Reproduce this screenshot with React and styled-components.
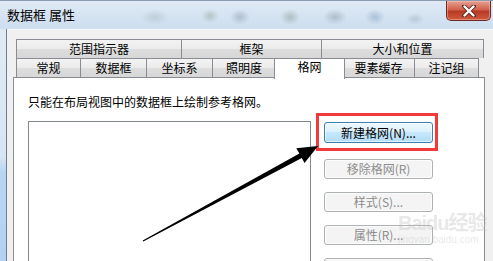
import React from 'react';
import styled, { createGlobalStyle } from 'styled-components';

const GlobalStyle = createGlobalStyle`
  html, body {
    margin: 0;
    padding: 0;
    overflow: hidden;
    background: #ffffff;
  }
`;

const FONT = `"Noto Sans CJK SC", "Liberation Sans", sans-serif`;

const Window = styled.div`
  position: relative;
  width: 493px;
  height: 261px;
  display: flex;
  flex-direction: column;
  overflow: hidden;
  font-family: ${FONT};
  font-size: 12px;
  color: #000;
  background: #c9dcef;
`;

const TitleBar = styled.div`
  height: 28px;
  flex-shrink: 0;
  display: flex;
  align-items: flex-start;
  justify-content: space-between;
  border-top: 1px solid #8a9bb0;
  background:
    radial-gradient(ellipse 9px 7px at 210px 15px, rgba(120, 140, 120, 0.35), transparent),
    radial-gradient(ellipse 10px 8px at 240px 16px, rgba(110, 120, 140, 0.35), transparent),
    radial-gradient(ellipse 10px 8px at 290px 16px, rgba(90, 110, 90, 0.3), transparent),
    radial-gradient(ellipse 12px 8px at 335px 16px, rgba(110, 120, 130, 0.35), transparent),
    radial-gradient(ellipse 10px 8px at 375px 16px, rgba(90, 130, 170, 0.35), transparent),
    radial-gradient(ellipse 9px 6px at 415px 18px, rgba(130, 140, 150, 0.3), transparent),
    radial-gradient(ellipse 14px 8px at 155px 16px, rgba(130, 140, 150, 0.25), transparent),
    linear-gradient(#dfe9f4, #cddef0);
`;

const Title = styled.span`
  margin: 6px 0 0 7px;
  font-size: 13px;
  line-height: 16px;
  white-space: pre;
`;

const CloseButton = styled.div`
  width: 43px;
  height: 19px;
  margin-right: 2px;
  display: flex;
  align-items: center;
  justify-content: center;
  border: 1px solid #6b2b22;
  border-top: none;
  border-radius: 0 0 5px 5px;
  background: linear-gradient(#e6a294 0%, #d2604c 45%, #b73a26 55%, #d05a3c 100%);
  box-shadow: inset 0 0 0 1px rgba(255, 200, 190, 0.45);
`;

const Body = styled.div`
  flex: 1;
  display: flex;
  min-height: 0;
`;

const FrameEdge = styled.div`
  width: 6px;
  flex-shrink: 0;
  border-right: 1px solid #6e7e90;
  background: linear-gradient(#dfeaf5 0%, #d7e6f4 55%, #b7d4f2 62%, #b3d2f3 100%);
`;

const Client = styled.div`
  flex: 1;
  display: flex;
  flex-direction: column;
  padding: 9px 0 0 6px;
  background: #f0f0f0;
  border-top: 1px solid #f7f9fb;
`;

const TabStrip = styled.div`
  display: flex;
  flex-direction: column;
  margin-left: 3px;
`;

const TabRow = styled.div`
  display: flex;
  height: ${p => p.$height}px;
  align-items: flex-end;
`;

const Tab = styled.div`
  box-sizing: border-box;
  width: ${p => p.$width}px;
  height: 100%;
  margin-left: -1px;
  display: flex;
  align-items: center;
  justify-content: center;
  border: 1px solid #898c95;
  border-bottom: none;
  background: linear-gradient(#f3f3f3 0%, #ebebeb 50%, #dddddd 51%, #d7d7d7 100%);
  line-height: 14px;

  &:first-child {
    margin-left: 0;
  }
`;

const ActiveTab = styled(Tab)`
  position: relative;
  z-index: 2;
  height: 21px;
  margin: 0 -2px -2px -2px;
  padding-bottom: 4px;
  background: #ffffff;
`;

const Panel = styled.div`
  flex: 1;
  width: 472px;
  box-sizing: border-box;
  border: 1px solid #898c95;
  border-bottom: none;
  background: #ffffff;
  padding: 16px 0 0 14px;
  display: flex;
  flex-direction: column;
`;

const Hint = styled.div`
  line-height: 16px;
  height: 16px;
`;

const Work = styled.div`
  display: flex;
  gap: 13px;
  margin-top: 11px;
`;

const ListBox = styled.div`
  width: 283px;
  height: 160px;
  box-sizing: border-box;
  border: 1px solid #828790;
  background: #ffffff;
`;

const ButtonColumn = styled.div`
  display: flex;
  flex-direction: column;
  gap: 13px;
  padding-top: 1px;
`;

const Button = styled.div`
  box-sizing: border-box;
  width: 109px;
  height: ${p => (p.$primary ? 21 : 20)}px;
  margin-bottom: ${p => (p.$primary ? 3 : 0)}px;
  display: flex;
  align-items: center;
  justify-content: center;
  border-radius: 3px;
  border: 1px solid ${p => (p.$primary ? '#3c7fb1' : '#adb2b5')};
  color: ${p => (p.$primary ? '#000000' : '#8d8d8d')};
  background: ${p =>
    p.$primary
      ? 'linear-gradient(#eef8fe 0%, #ddf1fc 45%, #c6e8fc 50%, #b2ddf6 100%)'
      : '#f4f4f4'};
  box-shadow: inset 0 0 0 1px ${p => (p.$primary ? 'rgba(255,255,255,0.6)' : '#fcfcfc')};
  line-height: 14px;
`;

const Highlight = styled.div`
  position: absolute;
  left: 316px;
  top: 113px;
  width: 122px;
  height: 38px;
  box-sizing: border-box;
  border: 3px solid #f23a3a;
  pointer-events: none;
`;

const ArrowLayer = styled.svg`
  position: absolute;
  left: 0;
  top: 0;
  pointer-events: none;
`;

const Watermark = styled.div`
  position: absolute;
  left: 398px;
  top: 212px;
  display: flex;
  flex-direction: column;
  white-space: nowrap;
  color: rgba(190, 190, 190, 0.35);
  font-family: "Liberation Sans", ${FONT};
  pointer-events: none;
`;

const MarkTop = styled.span`
  font-size: 20px;
  font-weight: bold;
  line-height: 22px;
  letter-spacing: -1px;
`;

const MarkUrl = styled.span`
  font-size: 10px;
  line-height: 12px;
`;

const rowOne = [
  ['范围指示器', 166],
  ['框架', 141],
  ['大小和位置', 163],
];

const rowTwo = [
  ['常规', 65],
  ['数据框', 67],
  ['坐标系', 67],
  ['照明度', 64],
  ['格网', 71, true],
  ['要素缓存', 73],
  ['注记组', 65],
];

const buttons = ['新建格网(N)...', '移除格网(R)', '样式(S)...', '属性(R)...', ''];

export default function App() {
  return (
    <Window>
      <GlobalStyle />
      <TitleBar>
        <Title>{'数据框 属性'}</Title>
        <CloseButton>
          <svg width="14" height="12" viewBox="0 0 14 12">
            <path
              d="M2 1 L12 11 M12 1 L2 11"
              stroke="#5a2a22"
              strokeWidth="4"
              strokeLinecap="round"
              fill="none"
            />
            <path
              d="M2.5 1.5 L11.5 10.5 M11.5 1.5 L2.5 10.5"
              stroke="#ffffff"
              strokeWidth="2.4"
              strokeLinecap="round"
            />
          </svg>
        </CloseButton>
      </TitleBar>
      <Body>
        <FrameEdge />
        <Client>
          <TabStrip>
            <TabRow $height={19}>
              {rowOne.map(([label, w]) => (
                <Tab key={label} $width={w}>{label}</Tab>
              ))}
            </TabRow>
            <TabRow $height={19}>
              {rowTwo.map(([label, w, active]) =>
                active ? (
                  <ActiveTab key={label} $width={w}>{label}</ActiveTab>
                ) : (
                  <Tab key={label} $width={w}>{label}</Tab>
                )
              )}
            </TabRow>
          </TabStrip>
          <Panel>
            <Hint>{'只能在布局视图中的数据框上绘制参考格网。'}</Hint>
            <Work>
              <ListBox />
              <ButtonColumn>
                {buttons.map((label, i) => (
                  <Button key={i} $primary={i === 0}>{label}</Button>
                ))}
              </ButtonColumn>
            </Work>
          </Panel>
        </Client>
      </Body>

      <Watermark>
        <MarkTop>{'Baidu经验'}</MarkTop>
        <MarkUrl>{'jingyan.baidu.com'}</MarkUrl>
      </Watermark>

      <Highlight />

      <ArrowLayer width="493" height="261" viewBox="0 0 493 261">
        <polygon
          points="318,146 304.5,163 301.8,158 143.3,241.5 142.7,240.4 299.4,153.6 296.3,148.3"
          fill="#000000"
        />
      </ArrowLayer>
    </Window>
  );
}
